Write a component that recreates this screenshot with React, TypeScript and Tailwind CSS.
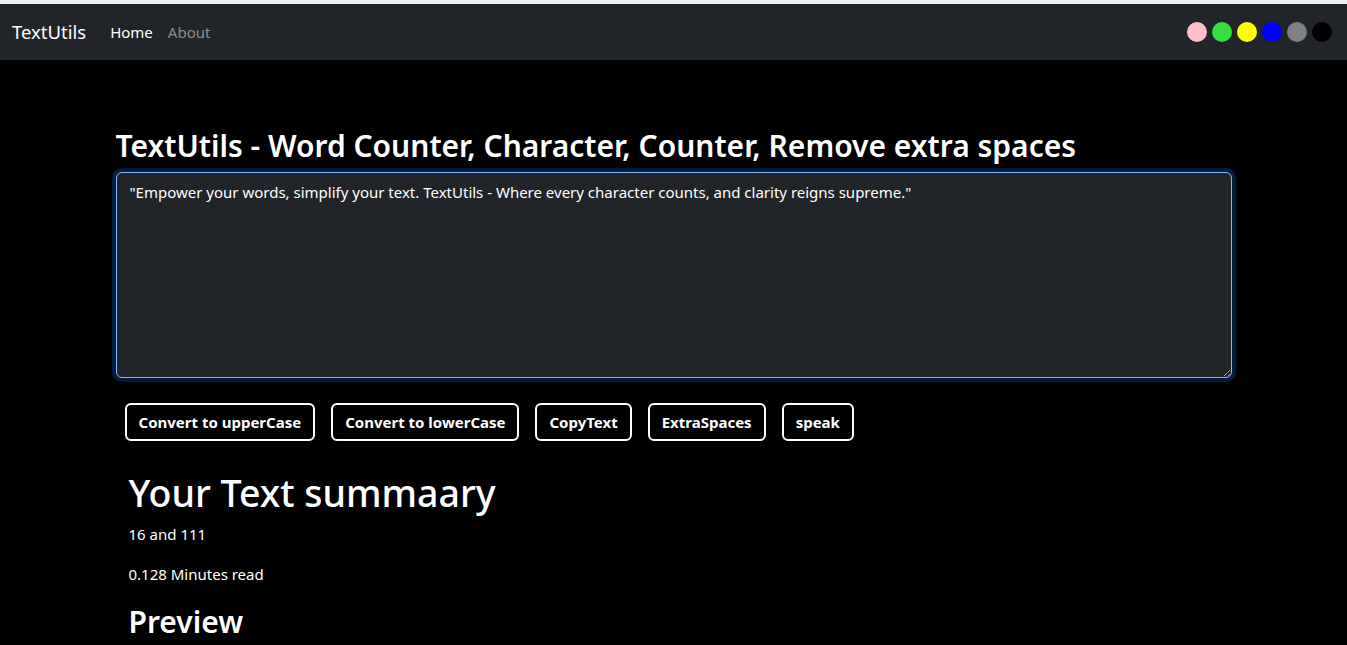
import React, { useState } from 'react';

const swatches = ['bg-[#ffc0cb]', 'bg-[#33e03c]', 'bg-[#ffff00]', 'bg-[#0000ff]', 'bg-[#808080]', 'bg-[#000000]'];

export default function App() {
    const [text, setText] = useState(
        '"Empower your words, simplify your text. TextUtils - Where every character counts, and clarity reigns supreme."'
    );

    const words = text.split(/\s+/).filter((w) => w.length !== 0).length;
    const buttons = ['Convert to upperCase', 'Convert to lowerCase', 'CopyText', 'ExtraSpaces', 'speak'];

    return (
        <div className="min-h-screen bg-black text-white font-['Noto_Sans',sans-serif]">
            <div className="h-1 bg-[#f0f0f0]" />
            {/* Navbar */}
            <nav className="h-14 bg-[#212529] flex items-center px-3">
                <span className="text-[18.5px] text-white mr-6">TextUtils</span>
                <a className="text-white text-[15px] mr-[15px]">Home</a>
                <a className="text-[#8c8d8f] text-[15px]">About</a>
                <div className="ml-auto flex items-center gap-[5px] pr-[3px]">
                    {swatches.map((c) => (
                        <div key={c} className={`w-5 h-5 rounded-full ${c}`} />
                    ))}
                </div>
            </nav>

            {/* Main */}
            <div className="w-[1116px] mx-auto pt-[68px]">
                <h2 className="text-[30px] font-semibold leading-[36px] mb-2">
                    TextUtils - Word Counter, Character, Counter, Remove extra spaces
                </h2>
                <textarea
                    value={text}
                    onChange={(e) => setText(e.target.value)}
                    className="block w-full h-[206px] bg-[#212529] text-white text-[15px] leading-6 px-[13px] py-[7px] border border-[#86b7fe] rounded-md outline-none shadow-[0_0_0_4px_rgba(13,110,253,0.25)]"
                />
                <div className="flex gap-4 mt-[25px] pl-[9px]">
                    {buttons.map((b) => (
                        <button
                            key={b}
                            className="h-[38px] px-3 border-2 border-white rounded-md text-[15px] font-bold text-white"
                        >
                            {b}
                        </button>
                    ))}
                </div>

                <div className="px-[13px] mt-[29px]">
                    <h1 className="text-[37.5px] font-medium leading-[1.2] mb-[7px]">Your Text summaary</h1>
                    <p className="text-[15px] leading-6 mb-4">
                        {words} and {text.length}
                    </p>
                    <p className="text-[15px] leading-6 mb-[18px]">{(0.008 * words).toFixed(3)} Minutes read</p>
                    <h2 className="text-[30px] font-semibold leading-[1.2]">Preview</h2>
                </div>
            </div>
        </div>
    );
}
